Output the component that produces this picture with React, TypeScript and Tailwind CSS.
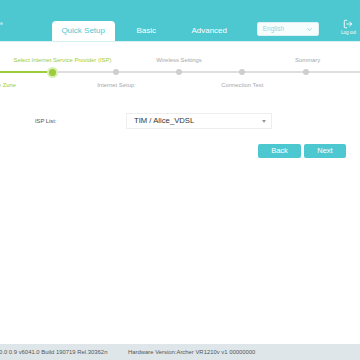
import { LogOut, ChevronDown } from 'lucide-react';

const steps = [
  { label: 'Time Zone', pos: 'bottom', state: 'done', shift: 'translate-x-[13px]' },
  { label: 'Select Internet Service Provider (ISP)', pos: 'top', state: 'active', shift: 'translate-x-[10px]' },
  { label: 'Internet Setup', pos: 'bottom', state: 'todo', shift: '' },
  { label: 'Wireless Settings', pos: 'top', state: 'todo', shift: '' },
  { label: 'Connection Test', pos: 'bottom', state: 'todo', shift: '' },
  { label: 'Summary', pos: 'top', state: 'todo', shift: 'translate-x-[2px]' },
  { label: '', pos: 'bottom', state: 'todo', shift: '' },
];

const tabs = ['Quick Setup', 'Basic', 'Advanced'];

export default function App() {
  return (
    <div
      className="flex h-[360px] w-[360px] flex-col overflow-hidden bg-white"
      style={{ fontFamily: '"Liberation Sans", Arial, sans-serif' }}
    >
      {/* header */}
      <header className="flex h-[42px] shrink-0 items-end border-b border-[#d7f1f3] bg-[#4dc7d0]">
        <span className="mb-[16px] h-[3px] w-[3px] rounded-full bg-white/50" />
        <nav className="ml-[49px] flex items-end">
          {tabs.map((t, i) => (
            <div
              key={t}
              className={`flex h-[20px] w-[63px] items-center justify-center rounded-t-[4px] text-[8px] ${
                i === 0 ? 'bg-white text-[#4dc7d0]' : 'text-white'
              }`}
            >
              {t}
            </div>
          ))}
        </nav>
        <div className="mb-[5px] ml-[16px] flex h-[14px] w-[68px] items-center justify-between rounded-[2px] border border-[#dcf1f3] bg-[#f7fcfd] px-[5px] text-[6.5px] text-[#9ad6dc]">
          <span>English</span>
          <ChevronDown size={7} strokeWidth={3} className="text-[#8fcfd6]" />
        </div>
        <div className="mb-[6px] ml-[18px] flex w-[26px] flex-col items-center text-white">
          <LogOut size={10} strokeWidth={2.2} />
          <span className="mt-[2px] text-[4.5px] leading-none whitespace-nowrap">Log out</span>
        </div>
      </header>

      <main className="flex-1">
        {/* stepper */}
        <div className="relative mt-[12px] h-[38px]">
          <div className="absolute top-[17px] right-0 left-0 h-[2px] bg-[#dedede]" />
          <div className="absolute top-[17px] left-0 h-[2px] w-[52px] bg-[#9ccc3b]" />
          <div className="relative ml-[-42.5px] flex">
            {steps.map((s, i) => {
              const green = s.state !== 'todo';
              const color = green ? 'text-[#9ccc3b]' : 'text-[#a8a8a8]';
              return (
                <div key={i} className="flex w-[63.3px] shrink-0 flex-col items-center">
                  <div className={`flex h-[12px] items-center text-[5.9px] whitespace-nowrap ${color} ${s.shift}`}>
                    {s.pos === 'top' ? s.label : ''}
                  </div>
                  <div className="flex h-[12px] items-center">
                    {s.state === 'active' ? (
                      <span className="flex h-[11px] w-[11px] items-center justify-center rounded-full bg-[#d9efb3]">
                        <span className="h-[7px] w-[7px] rounded-full bg-[#9ccc3b]" />
                      </span>
                    ) : (
                      <span
                        className={`h-[6px] w-[6px] rounded-full ${
                          s.state === 'done' ? 'bg-[#9ccc3b]' : 'bg-[#cfcfcf]'
                        }`}
                      />
                    )}
                  </div>
                  <div className={`flex h-[15px] items-center text-[5.9px] whitespace-nowrap ${color} ${s.shift}`}>
                    {s.pos === 'bottom' ? s.label : ''}
                  </div>
                </div>
              );
            })}
          </div>
        </div>

        {/* form */}
        <div className="mt-[21px] flex items-center">
          <span className="ml-[35px] w-[91px] text-[5.8px] text-[#555]">ISP List:</span>
          <div className="flex h-[16px] w-[146px] items-center justify-between border border-[#eeeeee] pr-[5px] pl-[7px] text-[7.7px] text-[#333]">
            <span>TIM / Alice_VDSL</span>
            <span className="h-0 w-0 border-x-[2.5px] border-t-[3px] border-x-transparent border-t-[#999]" />
          </div>
        </div>

        <div className="mt-[15px] flex justify-end gap-[3px] pr-[14px]">
          <button className="h-[14px] w-[43px] rounded-[2px] bg-[#4dc7d0] text-[7.5px] text-white">Back</button>
          <button className="h-[14px] w-[42px] rounded-[2px] bg-[#4dc7d0] text-[7.5px] text-white">Next</button>
        </div>
      </main>

      {/* footer */}
      <footer className="flex h-[16px] shrink-0 items-center bg-[#dfe6e9] text-[5.9px] text-[#555] whitespace-nowrap">
        <span className="ml-[-1px] w-[129px]">0.0 0.9 v6041.0 Build 190719 Rel.30362n</span>
        <span>Hardware Version:Archer VR1210v v1 00000000</span>
      </footer>
    </div>
  );
}
